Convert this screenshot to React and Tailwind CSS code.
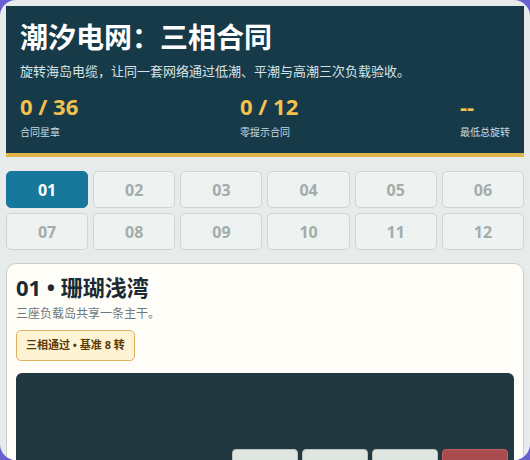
import { useState } from "react";

const levels = ["01", "02", "03", "04", "05", "06", "07", "08", "09", "10", "11", "12"];

const stats = [
  { value: "0 / 36", label: "合同星章" },
  { value: "0 / 12", label: "零提示合同" },
  { value: "--", label: "最低总旋转" },
];

const App = () => {
  const [current, setCurrent] = useState("01");

  return (
    <div
      className="min-h-screen bg-[#6a5fd0]"
      style={{ fontFamily: '"Open Sans", "Noto Sans CJK SC", sans-serif' }}
    >
      <div className="h-[460px] overflow-hidden rounded-[16px] bg-[#e7ecea] p-[6px]">
        {/* header */}
        <header className="border-b-4 border-[#e2b54a] bg-[#173a48] px-[14px] pb-[14px] pt-[14px]">
          <h1 className="text-[28px] font-bold leading-[34px] text-white">
            潮汐电网：三相合同
          </h1>
          <p className="mt-2 text-[13px] leading-[18px] text-[#d6e4e8]">
            旋转海岛电缆，让同一套网络通过低潮、平潮与高潮三次负载验收。
          </p>
          <div className="mt-[13px] flex justify-between">
            {stats.map((s) => (
              <div key={s.label}>
                <div className="text-[22px] font-bold leading-[26px] text-[#f2c14e]">
                  {s.value}
                </div>
                <div className="mt-[6px] text-[10px] leading-[14px] text-[#c9dbe0]">
                  {s.label}
                </div>
              </div>
            ))}
          </div>
        </header>

        {/* level picker */}
        <div className="mt-[14px] grid grid-cols-6 gap-[5px]">
          {levels.map((lv) => (
            <button
              key={lv}
              onClick={() => setCurrent(lv)}
              className={`h-[37px] rounded-[5px] border text-[16px] font-bold ${
                current === lv
                  ? "border-[#17789b] bg-[#17789b] text-white"
                  : "border-[#cdd6d2] bg-[#eef2f0] text-[#a3adab]"
              }`}
            >
              {lv}
            </button>
          ))}
        </div>

        {/* level card */}
        <section className="mt-[13px] rounded-[10px] border border-[#c5d0cc] bg-[#fffdf8] px-[9px] pt-[9px]">
          <h2 className="text-[22px] font-bold leading-[28px] text-[#1c2a33]">
            01 • 珊瑚浅湾
          </h2>
          <p className="mt-[5px] text-[12px] leading-[16px] text-[#6b7a80]">
            三座负载岛共享一条主干。
          </p>
          <div className="mt-[8px] inline-flex h-[31px] items-center rounded-[5px] border border-[#ddb25e] bg-[#fff3d6] px-[9px] text-[11px] font-bold text-[#5a3b06]">
            三相通过 • 基准 8 转
          </div>

          <div className="mt-[12px] flex h-[120px] justify-end gap-[4px] rounded-[6px] bg-[#213841] pr-[6px] pt-[76px]">
            <button className="h-[32px] w-[66px] rounded-[4px] border border-[#b9c4be] bg-[#dfe6e1]" />
            <button className="h-[32px] w-[66px] rounded-[4px] border border-[#b9c4be] bg-[#dfe6e1]" />
            <button className="h-[32px] w-[66px] rounded-[4px] border border-[#b9c4be] bg-[#dfe6e1]" />
            <button className="h-[32px] w-[66px] rounded-[4px] border border-[#c16065] bg-[#a94c50]" />
          </div>
        </section>
      </div>
    </div>
  );
};

export default App;
